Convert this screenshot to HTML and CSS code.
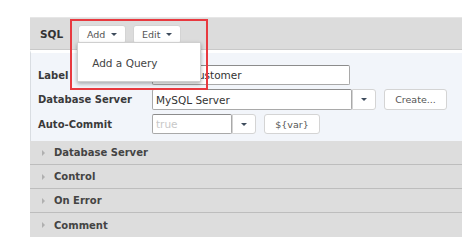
FILE: index.html
```html
<!DOCTYPE html>
<html lang="en">
<head>
  <meta charset="UTF-8" />
  <title>SQL</title>
  <link rel="stylesheet" href="styles.css">
</head>
<body>
  <div class="panel">
    <div class="panel-head">
      <span class="panel-title">SQL</span>
      <div class="dropdown">
        <button class="btn">Add <span class="caret"></span></button>
        <div class="menu">
          <div class="menu-item">Add a Query</div>
        </div>
      </div>
      <div class="dropdown">
        <button class="btn">Edit <span class="caret"></span></button>
      </div>
      <div class="highlight"></div>
    </div>

    <div class="panel-body">
      <label class="field-label">Label</label>
      <div class="field">
        <input class="text-input wide" type="text" value="Find a Customer" />
      </div>

      <label class="field-label">Database Server</label>
      <div class="field">
        <input class="text-input db" type="text" value="MySQL Server" />
        <button class="arrow-btn tall"><span class="caret"></span></button>
        <button class="btn create">Create...</button>
      </div>

      <label class="field-label">Auto-Commit</label>
      <div class="field">
        <input class="text-input small" type="text" placeholder="true" />
        <button class="arrow-btn"><span class="caret"></span></button>
        <button class="btn var">${var}</button>
      </div>
    </div>

    <div class="section"><span class="tri"></span>Database Server</div>
    <div class="section"><span class="tri"></span>Control</div>
    <div class="section"><span class="tri"></span>On Error</div>
    <div class="section last"><span class="tri"></span>Comment</div>
  </div>
</body>
</html>
```

FILE: styles.css
```css
* {
  box-sizing: border-box;
}

body {
  margin: 0;
  background: #ffffff;
  font-family: "DejaVu Sans", Verdana, sans-serif;
  color: #333;
}

.panel {
  position: relative;
  margin: 17px 0 0 30px;
  width: 432px;
}

.panel-head {
  position: relative;
  display: flex;
  align-items: center;
  height: 33px;
  padding-left: 10px;
  background: #dcdcdc;
  border-top: 1px solid #e6e6e6;
  border-bottom: 1px solid #c9c9c9;
}

.panel-title {
  font-size: 10.5px;
  font-weight: bold;
  color: #333;
  margin-right: 15px;
}

.dropdown {
  position: relative;
  margin-right: 7px;
}

.btn {
  display: inline-flex;
  align-items: center;
  justify-content: center;
  height: 19px;
  padding: 0 9px;
  background: #fff;
  border: 1px solid #d4d4d4;
  border-radius: 3px;
  font-family: inherit;
  font-size: 9.5px;
  color: #555;
}

.dropdown .btn {
  width: 48px;
}

.caret {
  display: inline-block;
  width: 0;
  height: 0;
  margin-left: 6px;
  border-left: 3px solid transparent;
  border-right: 3px solid transparent;
  border-top: 3px solid #3d4b5c;
}

.menu {
  position: absolute;
  top: 19px;
  left: -1px;
  width: 124px;
  height: 40px;
  background: #fff;
  border: 1px solid #cfcfcf;
  box-shadow: 0 2px 4px rgba(0, 0, 0, 0.3);
  z-index: 5;
}

.menu-item {
  padding-left: 14px;
  line-height: 40px;
  font-size: 10.5px;
  color: #444;
}

.highlight {
  position: absolute;
  left: 40px;
  top: 1px;
  width: 138px;
  height: 71px;
  border: 2px solid #e8393f;
  z-index: 6;
  pointer-events: none;
}

.panel-body {
  display: grid;
  grid-template-columns: 114px 1fr;
  row-gap: 4px;
  align-items: center;
  padding: 12px 0 7px 7px;
  background: #f2f5fa;
  border-top: 3px solid #fff;
  border-left: 1px solid #d9dde2;
}

.field-label {
  font-size: 10px;
  font-weight: bold;
  color: #3a3a3a;
}

.field {
  display: flex;
  align-items: center;
}

.text-input {
  height: 20px;
  padding: 0 3px;
  border: 1px solid #a9a9a9;
  border-top-color: #8c8c8c;
  border-radius: 2px;
  background: #fff;
  font-family: inherit;
  font-size: 10.5px;
  color: #333;
}

.text-input::placeholder {
  color: #c8c8c8;
}

.wide {
  width: 198px;
}

.db {
  width: 200px;
  height: 21px;
}

.small {
  width: 80px;
}

.arrow-btn {
  display: flex;
  align-items: center;
  justify-content: center;
  width: 24px;
  height: 20px;
  padding: 0;
  background: #fff;
  border: 1px solid #d4d4d4;
  border-radius: 0 3px 3px 0;
}

.arrow-btn.tall {
  height: 21px;
}

.arrow-btn .caret {
  margin: 0;
}

.field .btn {
  height: 20px;
  margin-left: 8px;
}

.create {
  width: 63px;
}

.field .create {
  height: 21px;
}

.var {
  width: 56px;
}

.section {
  display: flex;
  align-items: center;
  height: 24px;
  padding-left: 12px;
  background: #dddddd;
  border-bottom: 1px solid #bdbdbd;
  font-size: 10px;
  font-weight: bold;
  color: #444;
}

.section.last {
  border-bottom: none;
}

.tri {
  width: 0;
  height: 0;
  margin-right: 9px;
  border-top: 3px solid transparent;
  border-bottom: 3px solid transparent;
  border-left: 3px solid #b0b0b0;
}
```
